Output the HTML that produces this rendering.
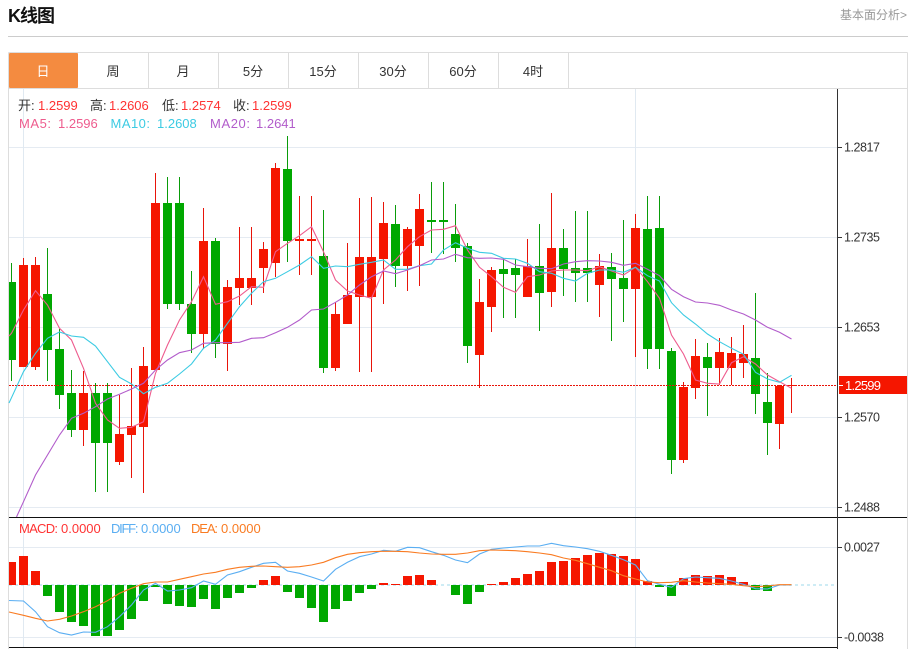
<!DOCTYPE html>
<html><head><meta charset="utf-8"><style>
html,body{margin:0;padding:0;background:#fff;width:917px;height:649px;overflow:hidden}
svg{display:block}
text{font-family:"Liberation Sans","Noto Sans CJK SC",sans-serif;font-size:13px}
.t{font-size:13px;fill:#333;text-anchor:middle}
.a{font-size:12.5px;fill:#333}
</style></head><body>
<svg width="917" height="649" viewBox="0 0 917 649" xmlns="http://www.w3.org/2000/svg">
<text x="8" y="22" style="font-size:18px;font-weight:bold" fill="#111" textLength="47">K线图</text>
<text x="840" y="19" style="font-size:12px" fill="#999">基本面分析&gt;</text>
<rect x="8" y="36" width="900" height="1" fill="#ccc"/>
<path d="M8.5 52.5H907.5M8.5 88.5H907.5M8.5 52.5V649M907.5 52.5V649M148.5 52V88M218.5 52V88M288.5 52V88M358.5 52V88M428.5 52V88M498.5 52V88M568.5 52V88" stroke="#ddd" fill="none"/>
<rect x="9" y="53" width="69" height="35" rx="1" fill="#f48b40"/>
<text class="t" x="43" y="76" style="fill:#fff">日</text>
<text class="t" x="113" y="76">周</text>
<text class="t" x="183" y="76">月</text>
<text class="t" x="253" y="76">5分</text>
<text class="t" x="323" y="76">15分</text>
<text class="t" x="393" y="76">30分</text>
<text class="t" x="463" y="76">60分</text>
<text class="t" x="533" y="76">4时</text>

<path d="M9 147.5H837M9 237.5H837M9 327.5H837M9 417.5H837M9 507.5H837M9 547.5H837M9 637.5H837" stroke="#e5ebf2" fill="none"/>
<path d="M23.5 89V647M635.5 89V647" stroke="#e0e9f1" fill="none"/>

<path d="M11.5 263V381M47.5 248V381M59.5 329V409M71.5 370V437M95.5 383V492M107.5 383V492M167.5 177V309M179.5 177V310M191.5 271V353M215.5 238V358M287.5 136V262M323.5 210V373M395.5 205V287M431.5 182V253M443.5 182V254M455.5 204V262M467.5 243V363M503.5 258V318M515.5 259V318M539.5 224V331M563.5 229V296M575.5 211V302M587.5 211V302M611.5 253V341M623.5 220V322M647.5 196V369M659.5 196V369M671.5 348V474M707.5 343V416M755.5 293V414M767.5 373V455" stroke="#0a9c0a" fill="none"/>
<path d="M9 282h7v78h-7zM43 294h9v56h-9zM55 349h9v46h-9zM67 393h9v37h-9zM91 393h9v50h-9zM103 393h9v50h-9zM163 203h9v101h-9zM175 203h9v101h-9zM187 304h9v30h-9zM211 241h9v103h-9zM283 169h9v72h-9zM319 256h9v112h-9zM391 224h9v42h-9zM427 220h9v2h-9zM439 220h9v2h-9zM451 234h9v14h-9zM463 246h9v100h-9zM499 269h9v5h-9zM511 268h9v7h-9zM535 266h9v27h-9zM559 248h9v21h-9zM571 268h9v5h-9zM583 268h9v5h-9zM607 267h9v12h-9zM619 278h9v11h-9zM643 229h9v120h-9zM655 228h9v121h-9zM667 351h9v109h-9zM703 357h9v11h-9zM751 358h9v36h-9zM763 402h9v21h-9z" fill="#00a800"/>
<path d="M23.5 258V367M35.5 257V370M83.5 371V446M119.5 395V465M131.5 368V478M143.5 347V493M155.5 173V370M203.5 208V349M227.5 280V371M239.5 227V305M251.5 227V305M263.5 242V293M275.5 163V277M299.5 196V275M311.5 196V275M335.5 302V371M347.5 243V324M359.5 198V372M371.5 197V372M383.5 202V304M407.5 227V291M419.5 194V286M479.5 279V388M491.5 267V332M527.5 239V297M551.5 193V307M599.5 254V317M635.5 214V357M683.5 382V463M695.5 339V399M719.5 338V385M731.5 337V385M743.5 325V378M779.5 385V449M791.5 378V413" stroke="#e8140a" fill="none"/>
<path d="M19 265h9v102h-9zM31 265h9v102h-9zM79 393h9v37h-9zM115 434h9v28h-9zM127 426h9v9h-9zM139 366h9v61h-9zM151 203h9v167h-9zM199 241h9v93h-9zM223 287h9v57h-9zM235 278h9v10h-9zM247 278h9v10h-9zM259 249h9v19h-9zM271 168h9v95h-9zM295 239h9v2h-9zM307 239h9v2h-9zM331 314h9v54h-9zM343 295h9v29h-9zM355 257h9v40h-9zM367 257h9v40h-9zM379 223h9v36h-9zM403 229h9v37h-9zM415 209h9v37h-9zM475 302h9v53h-9zM487 270h9v37h-9zM523 266h9v31h-9zM547 248h9v44h-9zM595 266h9v19h-9zM631 228h9v61h-9zM679 387h9v73h-9zM691 356h9v32h-9zM715 352h9v16h-9zM727 353h9v15h-9zM739 354h9v9h-9zM775 386h9v38h-9zM787 385h9v1h-9z" fill="#f51600"/>

<path d="M9 385.5H837" stroke="#e8140a" stroke-dasharray="2 1" fill="none"/>

<polyline fill="none" stroke="#ee5c8e" stroke-width="1.1" points="9,336 11.5,333.3 23.5,310 35.5,290.7 47.5,305 59.5,328.3 71.5,340 83.5,368.3 95.5,403.3 107.5,420 119.5,428.3 131.5,427.3 143.5,421.7 155.5,373.3 167.5,345 179.5,320 191.5,301.7 203.5,276.7 215.5,304.3 227.5,301.7 239.5,296 251.5,286.7 263.5,287.3 275.5,251.7 287.5,243.3 299.5,235.7 311.5,226.7 323.5,251.7 335.5,280 347.5,291 359.5,295 371.5,298.3 383.5,270 395.5,260 407.5,246.7 419.5,236.7 431.5,230 443.5,229.3 455.5,225.7 467.5,250 479.5,267.3 491.5,276.7 503.5,287.3 515.5,292.3 527.5,276.7 539.5,275 551.5,271 563.5,270 575.5,270 587.5,270.7 599.5,266.7 611.5,271 623.5,275 635.5,267.3 647.5,281.7 659.5,298.3 671.5,335 683.5,354 695.5,380 707.5,383.3 719.5,384 731.5,362.7 743.5,356.7 755.5,364 767.5,375 779.5,381.7 791.5,388.3"/>
<polyline fill="none" stroke="#3ccbe3" stroke-width="1.1" points="9,403 11.5,397.7 23.5,371.7 35.5,353.3 47.5,338.3 59.5,332 71.5,336 83.5,337.3 95.5,346 107.5,361.7 119.5,377.3 131.5,384 143.5,393.7 155.5,387.3 167.5,383.3 179.5,374 191.5,364 203.5,348.3 215.5,340 227.5,323.3 239.5,306.7 251.5,293.3 263.5,281.7 275.5,278.3 287.5,271.7 299.5,265 311.5,256.7 323.5,268.3 335.5,266 347.5,266.7 359.5,264.3 371.5,262.3 383.5,260 395.5,269.3 407.5,269.3 419.5,265.7 431.5,264 443.5,250 455.5,242.7 467.5,248.3 479.5,252.3 491.5,253.3 503.5,258.3 515.5,259 527.5,263.3 539.5,271.7 551.5,273.3 563.5,278.3 575.5,281 587.5,273.3 599.5,270 611.5,270 623.5,272.3 635.5,267.3 647.5,275.7 659.5,281 671.5,302.7 683.5,315 695.5,324 707.5,334 719.5,341.7 731.5,348.3 743.5,354.3 755.5,372.3 767.5,379 779.5,382.3 791.5,375.3"/>
<polyline fill="none" stroke="#b25ccb" stroke-width="1.1" points="16.5,517 23.5,501.7 35.5,475 47.5,455 59.5,435 71.5,418.3 83.5,413.3 95.5,406.7 107.5,399 119.5,394.3 131.5,389 143.5,383.3 155.5,370 167.5,360 179.5,352.7 191.5,350 203.5,343.3 215.5,342.7 227.5,342.7 239.5,342.3 251.5,338.3 263.5,337.7 275.5,332.7 287.5,327.3 299.5,320 311.5,310 323.5,309 335.5,302.3 347.5,295 359.5,285 371.5,276.7 383.5,271 395.5,273.7 407.5,270 419.5,265.7 431.5,260 443.5,259 455.5,254.3 467.5,257.7 479.5,258.3 491.5,258 503.5,259.3 515.5,265 527.5,266.7 539.5,268.3 551.5,268.7 563.5,264 575.5,261.7 587.5,260.7 599.5,261 611.5,262.3 623.5,265.3 635.5,263.3 647.5,269.3 659.5,275.7 671.5,289.3 683.5,296.7 695.5,302 707.5,303 719.5,305.3 731.5,310 743.5,314 755.5,320 767.5,327.3 779.5,332.3 791.5,339"/>

<rect x="839" y="376" width="68" height="18" fill="#f51600"/>
<path d="M839 385.5h4" stroke="#fff"/>
<text x="845" y="390" style="font-size:13px" fill="#fff" textLength="36">1.2599</text>

<path d="M9 517.5H907M9 647.5H838" stroke="#111" fill="none"/>
<path d="M837.5 89V650" stroke="#333" fill="none"/>
<path d="M838 147.5h4M838 237.5h4M838 327.5h4M838 417.5h4M838 507.5h4M838 547.5h4M838 637.5h4" stroke="#333" fill="none"/>
<text class="a" x="844" y="151.5" textLength="36">1.2817</text>
<text class="a" x="844" y="241.5" textLength="36">1.2735</text>
<text class="a" x="844" y="331.5" textLength="36">1.2653</text>
<text class="a" x="844" y="421.5" textLength="36">1.2570</text>
<text class="a" x="844" y="511.5" textLength="36">1.2488</text>
<text class="a" x="844" y="551.5" textLength="36">0.0027</text>
<text class="a" x="844" y="641.5" textLength="40">-0.0038</text>

<path d="M9 585H835" stroke="#bde6f2" stroke-width="1.5" stroke-dasharray="3 3" fill="none"/>
<path d="M43 585h9v11h-9zM55 585h9v27h-9zM67 585h9v37h-9zM79 585h9v41h-9zM91 585h9v51h-9zM103 585h9v51h-9zM115 585h9v45h-9zM127 585h9v34h-9zM139 585h9v16h-9zM151 585h9v2h-9zM163 585h9v19h-9zM175 585h9v21h-9zM187 585h9v22h-9zM199 585h9v14h-9zM211 585h9v24h-9zM223 585h9v13h-9zM235 585h9v8h-9zM247 585h9v3h-9zM283 585h9v7h-9zM295 585h9v13h-9zM307 585h9v23h-9zM319 585h9v37h-9zM331 585h9v24h-9zM343 585h9v16h-9zM355 585h9v8h-9zM367 585h9v4h-9zM451 585h9v10h-9zM463 585h9v19h-9zM475 585h9v7h-9zM655 585h9v2h-9zM667 585h9v11h-9zM751 585h9v5h-9zM763 585h9v6h-9z" fill="#00a800"/>
<path d="M9 562h7v23h-7zM19 556h9v29h-9zM31 571h9v14h-9zM259 580h9v5h-9zM271 576h9v9h-9zM379 583h9v2h-9zM391 584h9v1h-9zM403 576h9v9h-9zM415 575h9v10h-9zM427 580h9v5h-9zM487 584h9v1h-9zM499 582h9v3h-9zM511 578h9v7h-9zM523 574h9v11h-9zM535 571h9v14h-9zM547 562h9v23h-9zM559 561h9v24h-9zM571 558h9v27h-9zM583 555h9v30h-9zM595 553h9v32h-9zM607 554h9v31h-9zM619 556h9v29h-9zM631 559h9v26h-9zM643 581h9v4h-9zM679 578h9v7h-9zM691 575h9v10h-9zM703 576h9v9h-9zM715 575h9v10h-9zM727 577h9v8h-9zM739 582h9v3h-9z" fill="#f51600"/>

<polyline fill="none" stroke="#5aaef2" stroke-width="1.1" points="9,600.5 23.5,601 35.5,611.7 47.5,626.7 59.5,632.7 71.5,635 83.5,632 95.5,632.3 107.5,626.7 119.5,616.7 131.5,605 143.5,590 155.5,583.3 167.5,591 179.5,590 191.5,587.7 203.5,581 215.5,584.3 227.5,575 239.5,571.7 251.5,567.3 263.5,563.3 275.5,562.3 287.5,571 299.5,573.3 311.5,577 323.5,581 335.5,569.3 347.5,562.3 359.5,556.7 371.5,554 383.5,550.3 395.5,551.3 407.5,547.3 419.5,547.7 431.5,551.7 443.5,555.3 455.5,560 467.5,562.7 479.5,554 491.5,549.3 503.5,548 515.5,547 527.5,546 539.5,546 551.5,543.3 563.5,545.7 575.5,547 587.5,548.7 599.5,551.3 611.5,555.3 623.5,559.7 635.5,565 647.5,580.7 659.5,584.3 671.5,587.3 683.5,578.7 695.5,577 707.5,577.7 719.5,578.3 731.5,581 743.5,584.3 755.5,588.7 767.5,589 779.5,585 791.5,585"/>
<polyline fill="none" stroke="#f97b22" stroke-width="1.1" points="9,612 23.5,615.3 35.5,618.3 47.5,621 59.5,619.3 71.5,616 83.5,611.7 95.5,606.7 107.5,600.7 119.5,593.3 131.5,588.3 143.5,583.7 155.5,582 167.5,582 179.5,579.3 191.5,576.7 203.5,574 215.5,572.3 227.5,569.3 239.5,567.3 251.5,566.3 263.5,566 275.5,566.7 287.5,567.3 299.5,566.7 311.5,565 323.5,562.3 335.5,557.7 347.5,554.3 359.5,552.7 371.5,551.7 383.5,551.3 395.5,551.3 407.5,551.7 419.5,553 431.5,554 443.5,554.3 455.5,554.3 467.5,553 479.5,550.7 491.5,550 503.5,550.3 515.5,550.7 527.5,551.7 539.5,553 551.5,554.7 563.5,558 575.5,560.3 587.5,563.7 599.5,567.3 611.5,570.7 623.5,575.7 635.5,579 647.5,582 659.5,582.7 671.5,582.3 683.5,580.7 695.5,582 707.5,583 719.5,583.7 731.5,584.3 743.5,585.7 755.5,586.7 767.5,586 779.5,584.7 791.5,584.7"/>

<text x="18" y="110" fill="#333">开:</text><text x="38" y="110" fill="#f33">1.2599</text>
<text x="90" y="110" fill="#333">高:</text><text x="109" y="110" fill="#f33">1.2606</text>
<text x="162" y="110" fill="#333">低:</text><text x="181" y="110" fill="#f33">1.2574</text>
<text x="233" y="110" fill="#333">收:</text><text x="252" y="110" fill="#f33">1.2599</text>
<text x="19" y="128" fill="#ee5c8e" textLength="32">MA5:</text><text x="58" y="128" fill="#ee5c8e">1.2596</text>
<text x="110.5" y="128" fill="#3ccbe3" textLength="39.5">MA10:</text><text x="157" y="128" fill="#3ccbe3">1.2608</text>
<text x="210" y="128" fill="#b25ccb" textLength="40">MA20:</text><text x="256" y="128" fill="#b25ccb">1.2641</text>
<text x="19" y="533" fill="#f33" textLength="39">MACD:</text><text x="61" y="533" fill="#f33">0.0000</text>
<text x="111" y="533" fill="#5aaef2" textLength="27.5">DIFF:</text><text x="141" y="533" fill="#5aaef2">0.0000</text>
<text x="191" y="533" fill="#f97b22" textLength="27">DEA:</text><text x="221" y="533" fill="#f97b22">0.0000</text>
</svg>
</body></html>
